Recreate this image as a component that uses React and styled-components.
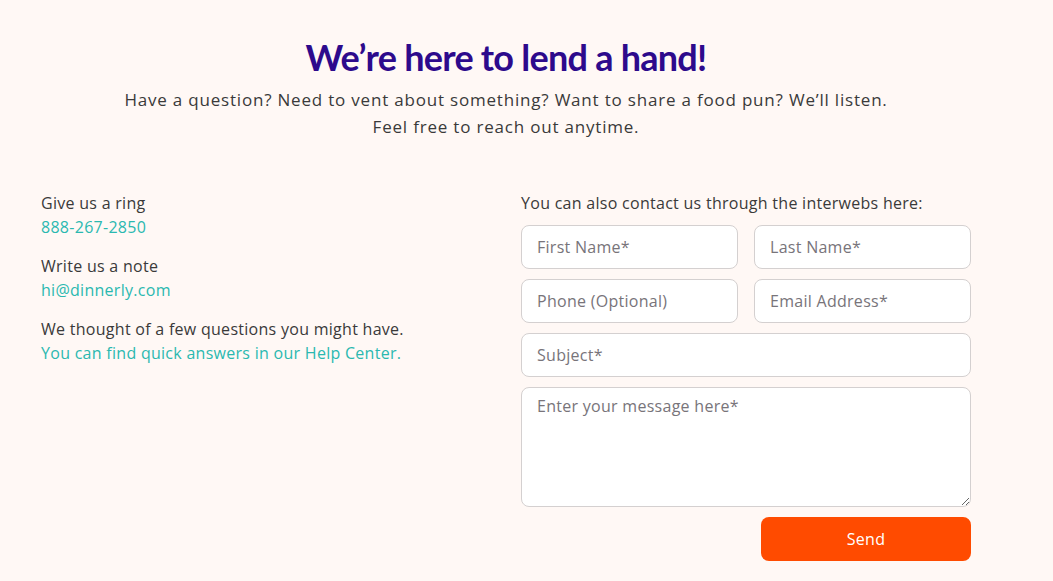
import styled, { createGlobalStyle } from "styled-components";

const GlobalStyle = createGlobalStyle`
    html, body {
        margin: 0;
        padding: 0;
        background: #fff8f5;
    }
    * {
        box-sizing: border-box;
    }
`;

const Page = styled.div`
    width: 930px;
    margin-left: 41px;
    padding-top: 36px;
    font-family: "Open Sans", "Liberation Sans", sans-serif;
    color: #3a3a3a;
`;

const Header = styled.header`
    text-align: center;
`;

const Title = styled.h1`
    margin: 0;
    font-family: "Lato", "Liberation Sans", sans-serif;
    font-size: 36px;
    line-height: 42px;
    font-weight: 700;
    letter-spacing: -0.75px;
    color: #2d0a8c;
`;

const Lead = styled.p`
    margin: 8px 0 0;
    font-size: 17px;
    line-height: 27px;
    font-weight: 500;
    letter-spacing: 0.8px;
`;

const Columns = styled.div`
    display: grid;
    grid-template-columns: 480px 450px;
    margin-top: 51px;
`;

const Info = styled.div`
    display: flex;
    flex-direction: column;
    gap: 15px;
`;

const InfoBlock = styled.p`
    margin: 0;
    font-size: 16px;
    line-height: 24px;
    letter-spacing: 0.28px;
`;

const Link = styled.a`
    display: block;
    color: #2bb8b0;
    text-decoration: none;
`;

const Form = styled.form`
    display: flex;
    flex-direction: column;
    gap: 10px;
`;

const FormLabel = styled.p`
    margin: 0;
    font-size: 16px;
    line-height: 24px;
    letter-spacing: 0.28px;
`;

const Row = styled.div`
    display: grid;
    grid-template-columns: 1fr 1fr;
    gap: 16px;
`;

const Field = styled.input`
    height: 44px;
    width: 100%;
    padding: 0 15px;
    border: 1px solid #d4d0d0;
    border-radius: 8px;
    background: #ffffff;
    font-family: inherit;
    font-size: 16px;
    letter-spacing: 0.28px;
    color: #333;
    outline: none;

    &::placeholder {
        color: #78747a;
    }
`;

const Message = styled.textarea`
    height: 120px;
    width: 100%;
    padding: 7px 15px;
    border: 1px solid #d4d0d0;
    border-radius: 8px;
    background: #ffffff;
    font-family: inherit;
    font-size: 16px;
    letter-spacing: 0.28px;
    line-height: 22px;
    outline: none;
    resize: vertical;

    &::placeholder {
        color: #78747a;
    }
`;

const Actions = styled.div`
    display: flex;
    justify-content: flex-end;
`;

const SendButton = styled.button`
    width: 210px;
    height: 44px;
    border: none;
    border-radius: 8px;
    background: #ff4b00;
    color: #ffffff;
    font-family: inherit;
    font-size: 16px;
    letter-spacing: 0.28px;
    cursor: pointer;
`;

const App = () => {
    return (
        <>
            <GlobalStyle />
            <Page>
                <Header>
                    <Title>We’re here to lend a hand!</Title>
                    <Lead>
                        Have a question? Need to vent about something? Want to
                        share a food pun? We’ll listen.
                        <br />
                        Feel free to reach out anytime.
                    </Lead>
                </Header>

                <Columns>
                    <Info>
                        <InfoBlock>
                            Give us a ring
                            <Link href="#">888-267-2850</Link>
                        </InfoBlock>
                        <InfoBlock>
                            Write us a note
                            <Link href="#">hi@dinnerly.com</Link>
                        </InfoBlock>
                        <InfoBlock>
                            We thought of a few questions you might have.
                            <Link href="#">
                                You can find quick answers in our Help Center.
                            </Link>
                        </InfoBlock>
                    </Info>

                    <Form onSubmit={(e) => e.preventDefault()}>
                        <FormLabel>
                            You can also contact us through the interwebs here:
                        </FormLabel>
                        <Row>
                            <Field placeholder="First Name*" />
                            <Field placeholder="Last Name*" />
                        </Row>
                        <Row>
                            <Field placeholder="Phone (Optional)" />
                            <Field placeholder="Email Address*" />
                        </Row>
                        <Field placeholder="Subject*" />
                        <Message placeholder="Enter your message here*" />
                        <Actions>
                            <SendButton type="submit">Send</SendButton>
                        </Actions>
                    </Form>
                </Columns>
            </Page>
        </>
    );
};

export default App;
